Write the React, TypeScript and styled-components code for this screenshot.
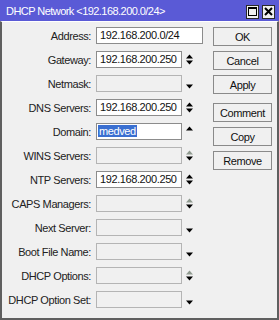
import React from 'react'
import styled, { createGlobalStyle } from 'styled-components'

type Spin = 'both' | 'down' | 'up' | 'grayUp' | 'none'

interface IField {
	label: string
	value?: string
	spin: Spin
	wide?: boolean
	selected?: boolean
}

const fields: IField[] = [
	{ label: 'Address:', value: '192.168.200.0/24', spin: 'none', wide: true },
	{ label: 'Gateway:', value: '192.168.200.250', spin: 'both' },
	{ label: 'Netmask:', spin: 'down' },
	{ label: 'DNS Servers:', value: '192.168.200.250', spin: 'both' },
	{ label: 'Domain:', value: 'medved', spin: 'up', selected: true },
	{ label: 'WINS Servers:', spin: 'grayUp' },
	{ label: 'NTP Servers:', value: '192.168.200.250', spin: 'both' },
	{ label: 'CAPS Managers:', spin: 'grayUp' },
	{ label: 'Next Server:', spin: 'down' },
	{ label: 'Boot File Name:', spin: 'down' },
	{ label: 'DHCP Options:', spin: 'grayUp' },
	{ label: 'DHCP Option Set:', spin: 'down' },
]

const SpinIcon = ({ kind }: { kind: Spin }) => {
	if (kind === 'none') return null
	const up = kind === 'both' || kind === 'up' || kind === 'grayUp'
	const down = kind !== 'up'
	return (
		<svg width="7" height="11" viewBox="0 0 7 11">
			{up && <path d="M0 4.5 L3.5 0.5 L7 4.5 Z" fill={kind === 'grayUp' ? '#8f9a8f' : '#000'} />}
			{down && <path d="M0 6.5 L7 6.5 L3.5 10.5 Z" fill="#000" />}
		</svg>
	)
}

export default function App() {
	return (
		<>
			<GlobalStyle />
			<Window>
				<TitleBar>
					<Title>DHCP Network &lt;192.168.200.0/24&gt;</Title>
					<TitleButtons>
						<TitleButton>
							<svg width="9" height="9" viewBox="0 0 9 9">
								<rect x="0.5" y="0.5" width="8" height="8" fill="none" stroke="#000" />
								<rect x="0.5" y="0.5" width="8" height="1.5" fill="#000" />
							</svg>
						</TitleButton>
						<TitleButton>
							<svg width="9" height="9" viewBox="0 0 9 9">
								<path d="M1 1 L8 8 M8 1 L1 8" stroke="#000" strokeWidth="2" />
							</svg>
						</TitleButton>
					</TitleButtons>
				</TitleBar>
				<Body>
					<Form>
						{fields.map((f) => (
							<React.Fragment key={f.label}>
								<Label>{f.label}</Label>
								<Input $wide={f.wide} $empty={!f.value}>
									{f.selected ? <Selected>{f.value}</Selected> : f.value}
								</Input>
								{!f.wide && (
									<SpinCell>
										<SpinIcon kind={f.spin} />
									</SpinCell>
								)}
							</React.Fragment>
						))}
					</Form>
					<Buttons>
						<Button>OK</Button>
						<Button>Cancel</Button>
						<Button>Apply</Button>
						<Button $gap>Comment</Button>
						<Button>Copy</Button>
						<Button>Remove</Button>
					</Buttons>
				</Body>
			</Window>
		</>
	)
}

const GlobalStyle = createGlobalStyle`
	body {
		margin: 0;
		background: #f0f0f0;
	}
`

const Window = styled.div`
	width: 279px;
	height: 320px;
	display: flex;
	flex-direction: column;
	font-family: "Liberation Sans", Arial, sans-serif;
	font-size: 11px;
	letter-spacing: -0.4px;
	color: #1a1a1a;
`

const TitleBar = styled.div`
	height: 21px;
	flex: none;
	background: #5a5ad6;
	display: flex;
	align-items: center;
	justify-content: space-between;
	padding: 0 4px 0 6px;
`

const Title = styled.div`
	color: #fff;
	font-size: 11px;
	letter-spacing: -0.55px;
`

const TitleButtons = styled.div`
	display: flex;
	gap: 3px;
	padding-top: 2px;
`

const TitleButton = styled.div`
	width: 11px;
	height: 12px;
	background: #f0f0f0;
	border: 1px solid #2a2a2a;
	display: flex;
	align-items: center;
	justify-content: center;
`

const Body = styled.div`
	flex: 1;
	display: flex;
	align-items: flex-start;
	background: #f0f0f0;
	border: 2px solid #5f5f5f;
	border-top: 1px solid #ffffff;
	padding: 5px 0 0 2px;
`

const Form = styled.div`
	display: grid;
	grid-template-columns: 87px 86px 16px;
	grid-auto-rows: 17px;
	row-gap: 7px;
	column-gap: 5px;
	align-items: center;
`

const Label = styled.div`
	text-align: right;
	white-space: nowrap;
	color: #222;
`

const Input = styled.div<{ $wide?: boolean; $empty?: boolean }>`
	grid-column: ${(p) => (p.$wide ? '2 / span 2' : 'auto')};
	height: 17px;
	box-sizing: border-box;
	border: 1px solid ${(p) => (p.$empty ? '#b4b4b4' : '#8c8c8c')};
	background: ${(p) => (p.$empty ? '#f0f0f0' : '#ffffff')};
	padding: 0 3px;
	line-height: 15px;
	color: #111;
	white-space: nowrap;
	overflow: hidden;
`

const Selected = styled.span`
	background: #3a6fd1;
	color: #fff;
	margin-left: -2px;
	padding: 0 1px;
`

const SpinCell = styled.div`
	display: flex;
	align-items: center;
	margin-left: -1px;
`

const Buttons = styled.div`
	display: flex;
	flex-direction: column;
	gap: 5px;
	margin-left: 10px;
`

const Button = styled.div<{ $gap?: boolean }>`
	width: 59px;
	height: 19px;
	box-sizing: border-box;
	border: 1px solid #8a8a8a;
	background: #f0f0f0;
	display: flex;
	align-items: center;
	justify-content: center;
	color: #111;
	margin-top: ${(p) => (p.$gap ? '4px' : '0')};
`
